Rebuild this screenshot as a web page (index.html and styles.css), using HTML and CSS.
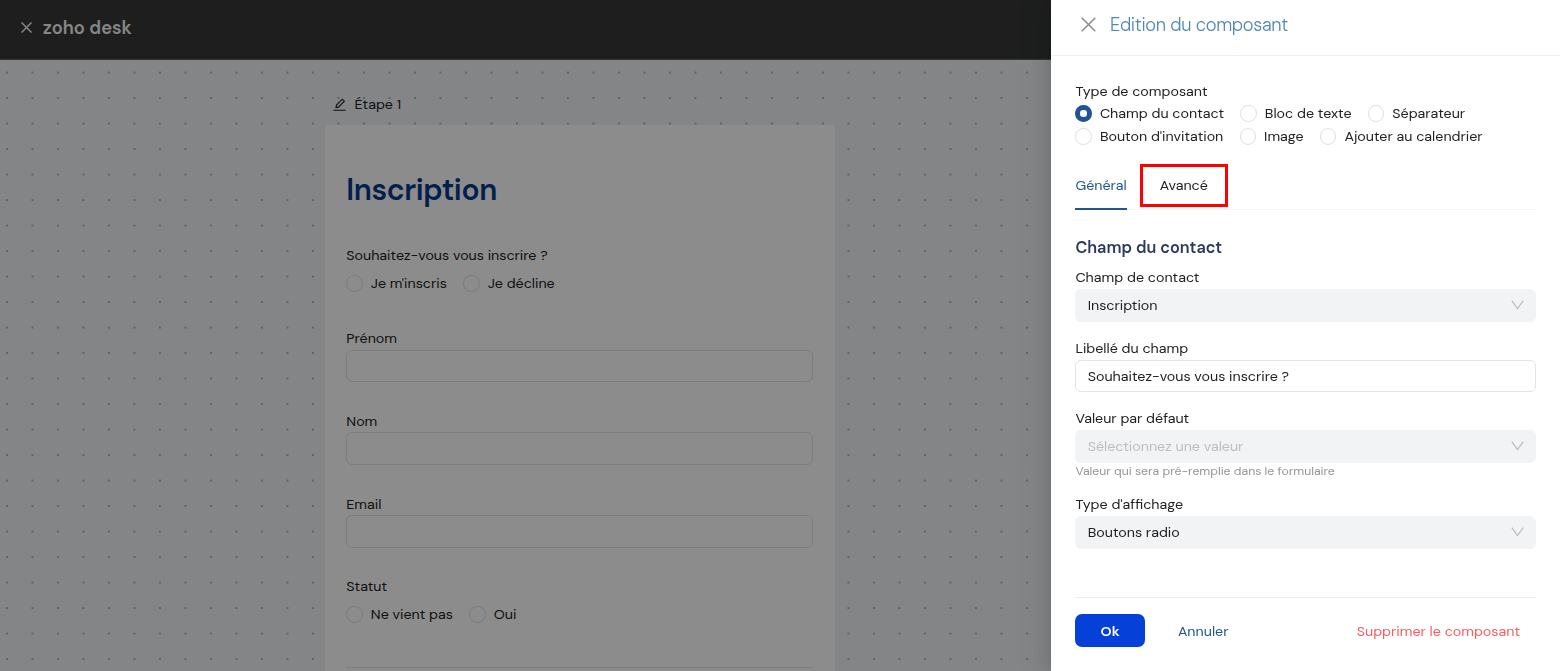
FILE: index.html
```html
<!DOCTYPE html>
<html lang="fr">
<head>
    <meta charset="utf-8">
    <title>zoho desk</title>
    <meta name="viewport" content="width=device-width, initial-scale=1">
    <link rel="stylesheet" href="styles.css">
</head>
<body>
    <header class="topbar">
        <svg class="close" width="11" height="11" viewBox="0 0 11 11"><path d="M.5 .5L10.5 10.5M10.5 .5L.5 10.5"/></svg>
        <span class="name">zoho desk</span>
    </header>

    <main class="canvas">
        <div class="step">
            <svg width="13" height="13" viewBox="0 0 13 13"><path d="M.3 12.2H12.7M3 9.6L3.5 7L9.3 1.2L11.3 3.2L5.5 9.1Z"/></svg>
            <span class="step-name">Étape 1</span>
        </div>
        <section class="card">
            <h1>Inscription</h1>
            <div class="question">
                <div class="label">Souhaitez-vous vous inscrire ?</div>
                <div class="radios">
                    <label class="radio"><i></i><span>Je m'inscris</span></label>
                    <label class="radio"><i></i><span>Je décline</span></label>
                </div>
            </div>
            <div class="question">
                <div class="label">Prénom</div>
                <div class="input"></div>
            </div>
            <div class="question">
                <div class="label">Nom</div>
                <div class="input"></div>
            </div>
            <div class="question">
                <div class="label">Email</div>
                <div class="input"></div>
            </div>
            <div class="question">
                <div class="label">Statut</div>
                <div class="radios">
                    <label class="radio"><i></i><span>Ne vient pas</span></label>
                    <label class="radio"><i></i><span>Oui</span></label>
                </div>
            </div>
            <div class="separator"></div>
        </section>
    </main>

    <div class="mask"></div>

    <aside class="drawer">
        <div class="drawer-header">
            <svg class="close" width="15" height="15" viewBox="0 0 15 15"><path d="M.7 .7L14.3 14.3M14.3 .7L.7 14.3"/></svg>
            <span class="drawer-title">Edition du composant</span>
        </div>
        <div class="drawer-body">
            <div class="label">Type de composant</div>
            <div class="radios">
                <label class="radio checked"><i></i><span>Champ du contact</span></label>
                <label class="radio"><i></i><span>Bloc de texte</span></label>
                <label class="radio"><i></i><span>Séparateur</span></label>
            </div>
            <div class="radios">
                <label class="radio"><i></i><span>Bouton d'invitation</span></label>
                <label class="radio"><i></i><span>Image</span></label>
                <label class="radio"><i></i><span>Ajouter au calendrier</span></label>
            </div>

            <nav class="tabs">
                <div class="tab active">Général</div>
                <div class="tab marked">Avancé</div>
            </nav>

            <h2>Champ du contact</h2>
            <div class="field">
                <div class="label">Champ de contact</div>
                <div class="select"><span>Inscription</span><svg width="13" height="10" viewBox="0 0 13 10"><path d="M.8 .7L6.5 8.6L12.2 .7"/></svg></div>
            </div>
            <div class="field">
                <div class="label">Libellé du champ</div>
                <div class="input"><span>Souhaitez-vous vous inscrire ?</span></div>
            </div>
            <div class="field">
                <div class="label">Valeur par défaut</div>
                <div class="select placeholder"><span>Sélectionnez une valeur</span><svg width="13" height="10" viewBox="0 0 13 10"><path d="M.8 .7L6.5 8.6L12.2 .7"/></svg></div>
                <div class="help">Valeur qui sera pré-remplie dans le formulaire</div>
            </div>
            <div class="field">
                <div class="label">Type d'affichage</div>
                <div class="select"><span>Boutons radio</span><svg width="13" height="10" viewBox="0 0 13 10"><path d="M.8 .7L6.5 8.6L12.2 .7"/></svg></div>
            </div>

            <footer class="actions">
                <button class="ok">Ok</button>
                <a class="cancel">Annuler</a>
                <a class="delete">Supprimer le composant</a>
            </footer>
        </div>
    </aside>
</body>
</html>
```
FILE: styles.css
```css
*,
*::after {
    box-sizing: border-box;
}

body {
    margin: 0;
    height: 671px;
    overflow: hidden;
    font-family: "DM Sans", Inter, sans-serif;
    font-size: 14.25px;
    line-height: 22px;
    color: #212121;
}

svg {
    display: block;
    fill: none;
    stroke: currentColor;
    stroke-width: 1.15;
}

h1, h2 {
    margin: 0;
}

.topbar {
    display: flex;
    align-items: center;
    gap: 11px;
    height: 60px;
    padding: 0 0 5px 21px;
    background: #353836;
    border-bottom: 1px solid #5c5e5e;
    color: #f5f5f5;
}

.close {
    stroke-width: 1.5;
}

.name {
    padding-top: 1px;
    font-size: 18.25px;
    font-weight: 600;
}

.canvas {
    height: 611px;
    padding: 33px 0 0 324.5px;
    overflow: hidden;
    background-color: #f0f2f5;
    background-image: radial-gradient(circle, #b0b3b6 0.8px, transparent 1.3px);
    background-size: 25.5px 25.5px;
    background-position: -5.8px -0.2px;
}

.step {
    display: flex;
    align-items: center;
    gap: 9px;
    height: 22px;
    margin-bottom: 10.3px;
    padding-left: 8px;
}

.card {
    width: 510px;
    height: 560px;
    padding: 43px 21.8px 0;
    background: #fff;
}

h1 {
    margin-bottom: 32px;
    font-size: 30px;
    line-height: 44px;
    font-weight: 600;
    letter-spacing: -0.4px;
    color: #073a8a;
}

.question {
    height: 82.8px;
}

.question .label {
    line-height: 22.6px;
}

.question .radios {
    padding-top: 5px;
}

.input,
.select {
    display: flex;
    align-items: center;
    justify-content: space-between;
    height: 32.6px;
    padding: 0 11px 0 11.3px;
    border: 1px solid #e4e4e6;
    border-radius: 6px;
}

.radios {
    display: flex;
    gap: 16.3px;
    line-height: 23px;
}

.radio {
    display: flex;
    align-items: center;
    gap: 8px;
}

.radio i {
    width: 16.5px;
    height: 16.5px;
    border: 1px solid #dfdfdf;
    border-radius: 50%;
}

.radio.checked i {
    border: 5px solid #205493;
}

.separator {
    margin-top: 9px;
    border-top: 1px solid #e4e4e6;
}

.mask {
    position: fixed;
    inset: 0;
    background: rgba(0, 0, 0, 0.45);
}

.drawer {
    position: fixed;
    top: 0;
    right: 0;
    bottom: 0;
    width: 509px;
    background: #fff;
    box-shadow: -6px 0 16px rgba(0, 0, 0, 0.08), -3px 0 6px -4px rgba(0, 0, 0, 0.12), -9px 0 28px 8px rgba(0, 0, 0, 0.05);
}

.drawer-header {
    display: flex;
    align-items: center;
    gap: 14px;
    height: 56px;
    padding: 0 30px 6px;
    border-bottom: 1px solid #f0f0f0;
    color: #8a8a8a;
}

.drawer-title {
    font-size: 18.25px;
    font-weight: 300;
    letter-spacing: -0.35px;
    color: #5288b5;
}

.drawer-body {
    padding: 24px 24px 0 24.4px;
}

.tabs {
    display: flex;
    gap: 33px;
    height: 47px;
    margin-top: 15px;
    border-bottom: 1px solid #f3f3f3;
}

.tab {
    position: relative;
    height: 47px;
    padding-top: 11px;
}

.tab.active {
    color: #205493;
    border-bottom: 2.5px solid #205493;
}

.tab.marked::after {
    content: "";
    position: absolute;
    top: 1px;
    left: -20px;
    width: 88px;
    height: 43px;
    border: 3px solid #f00;
}

h2 {
    margin: 25.8px 0 7.5px;
    font-size: 16.25px;
    line-height: 24px;
    font-weight: 600;
    color: #2c3a5f;
}

.field {
    margin-bottom: 16px;
}

.field .label {
    padding-bottom: 0.8px;
    line-height: 21.2px;
}

.select {
    padding-bottom: 1px;
    background: #f2f3f5;
    border-color: #f2f3f5;
}

.select svg {
    color: #b9babc;
}

.placeholder {
    color: #bcbdbf;
}

.help {
    margin-bottom: -0.6px;
    font-size: 12.25px;
    line-height: 16px;
    color: #959595;
}

.actions {
    display: flex;
    align-items: center;
    margin-top: 48.4px;
    padding: 16px 16px 0 0;
    border-top: 1px solid #ececec;
}

.ok {
    width: 69.5px;
    height: 33px;
    border: 0;
    border-radius: 7px;
    background: #0540d8;
    color: #fff;
    font: inherit;
    font-weight: 600;
}

.cancel {
    margin-left: 33px;
    color: #205493;
}

.delete {
    margin-left: auto;
    color: #ff5a5c;
}
```
